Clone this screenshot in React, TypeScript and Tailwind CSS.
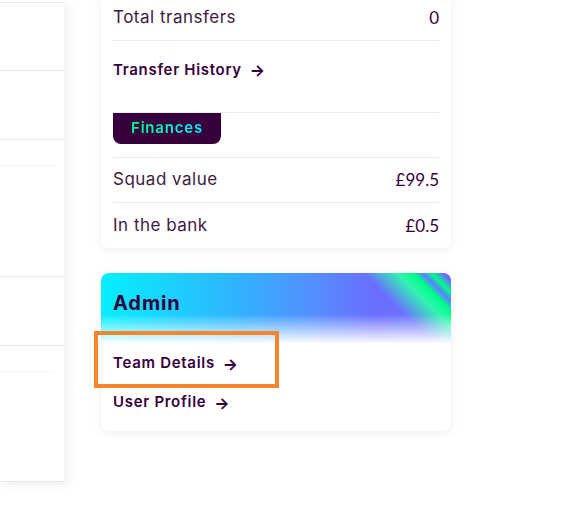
import React from "react";

const font = { fontFamily: "Inter, 'Noto Sans', sans-serif" };
const numFont = { fontFamily: "Lato, 'Noto Sans', sans-serif" };

function LeftCard() {
  return (
    <div className="h-[482px] w-16 shrink-0 bg-white shadow-[4px_4px_10px_rgba(0,0,0,0.06)]">
      <div className="h-[3px] border-b border-[#e6e6e6]" />
      <div className="h-[68px] border-b border-[#e6e6e6]" />
      <div className="h-[69px] border-b border-[#e6e6e6]" />
      <div className="h-[26px]">
        <div className="h-full w-[55px] border-b border-[#f3f3f3]" />
      </div>
      <div className="h-[111px] border-b border-[#e6e6e6]" />
      <div className="h-[69px] border-b border-[#e6e6e6]" />
      <div className="h-[26px]">
        <div className="h-full w-[55px] border-b border-[#f5f5f5]" />
      </div>
      <div className="h-[110px] border-b border-[#e6e6e6]" />
    </div>
  );
}

function StatRow({ label, value, last }: { label: string; value: string; last?: boolean }) {
  return (
    <div
      className={`flex h-[45px] items-center justify-between text-[#37003c] ${
        last ? "" : "border-b border-[#ebebeb]"
      }`}
    >
      <span className="text-[17px] font-normal tracking-[0.5px] text-[#3d1a42]">{label}</span>
      <span className="text-[17px]" style={numFont}>
        {value}
      </span>
    </div>
  );
}

function Arrow() {
  return <span className="ml-2 text-[16px] font-bold">→</span>;
}

function LinkRow({ label }: { label: string }) {
  return (
    <a className="flex h-[39px] items-center text-[15px] font-semibold tracking-[0.7px] text-[#37003c]">
      {label}
      <Arrow />
    </a>
  );
}

export default function App() {
  return (
    <div className="relative flex h-[527px] w-[579px] items-start overflow-hidden bg-white" style={font}>
      <LeftCard />

      <div className="-mt-[4px] ml-[37px] flex w-[350px] flex-col gap-[26px]">
        <div className="rounded-b-lg bg-white px-3 shadow-[0_2px_10px_rgba(0,0,0,0.07)]">
          <StatRow label="Total transfers" value="0" />
          <div className="h-[72px] border-b border-[#ebebeb] pt-[19px]">
            <a className="flex h-5 items-center text-[15px] font-semibold tracking-[0.7px] text-[#37003c]">
              Transfer History
              <Arrow />
            </a>
          </div>
          <div className="h-[45px] border-b border-[#ebebeb]">
            <div className="flex h-[31px] w-[108px] items-center justify-center rounded-b-lg bg-[#37003c]">
              <span className="bg-gradient-to-r from-[#00ff87] to-[#05f0ff] bg-clip-text text-[15px] font-semibold tracking-[0.8px] text-transparent">
                Finances
              </span>
            </div>
          </div>
          <StatRow label="Squad value" value="£99.5" />
          <StatRow label="In the bank" value="£0.5" last />
        </div>

        <div className="-mt-px overflow-hidden rounded-lg bg-white shadow-[0_2px_10px_rgba(0,0,0,0.07)]">
          <div className="h-[71px] bg-[linear-gradient(to_bottom,rgba(255,255,255,0)_58%,#ffffff_100%),linear-gradient(225deg,#6a6dff_0px,#6a6dff_6px,#00ff87_14px,#5a80ff_20px,#00ff87_27px,#30f5b0_38px,rgba(60,200,255,0)_62px),linear-gradient(to_right,#05f0ff_0%,#2fb4ff_38%,#5390ff_60%,#6b6dff_78%,#6a78ff_100%)] px-3 pt-[19px]">
            <h2 className="text-[20px] font-bold leading-[22px] tracking-[0.9px] text-[#37003c]">Admin</h2>
          </div>
          <div className="px-3 pb-[9px]">
            <LinkRow label="Team Details" />
            <LinkRow label="User Profile" />
          </div>
        </div>
      </div>

      <div className="absolute left-[94px] top-[331px] h-[57px] w-[185px] border-4 border-[#f7852b]" />
    </div>
  );
}
